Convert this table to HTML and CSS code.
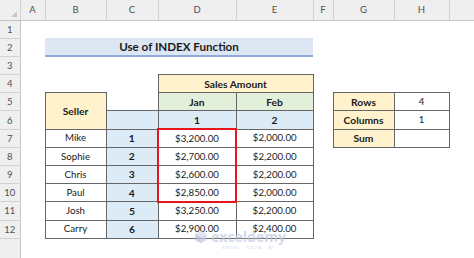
FILE: index.html
```html
<!DOCTYPE html>
<html lang="en">
<head>
    <meta charset="UTF-8">
    <title>Use of INDEX Function</title>
    <link rel="stylesheet" href="styles.css">
</head>
<body>
    <div class="sheet">
        <table class="grid">
            <colgroup>
                <col class="c-head">
                <col class="c-a">
                <col class="c-b">
                <col class="c-c">
                <col class="c-d">
                <col class="c-e">
                <col class="c-f">
                <col class="c-g">
                <col class="c-h">
                <col class="c-i">
            </colgroup>
            <tr class="col-heads">
                <th class="corner"><span class="tri"></span></th>
                <th>A</th><th>B</th><th>C</th><th>D</th><th>E</th><th>F</th><th>G</th><th>H</th><th></th>
            </tr>
            <tr>
                <th class="row-head">1</th>
                <td></td><td></td><td></td><td></td><td></td><td></td><td></td><td></td><td></td>
            </tr>
            <tr>
                <th class="row-head">2</th>
                <td></td>
                <td class="title" colspan="4">Use of INDEX Function</td>
                <td></td><td></td><td></td><td></td>
            </tr>
            <tr>
                <th class="row-head">3</th>
                <td></td><td></td><td></td><td></td><td></td><td></td><td></td><td></td><td></td>
            </tr>
            <tr>
                <th class="row-head">4</th>
                <td></td><td></td><td></td>
                <td class="box orange bold" colspan="2">Sales Amount</td>
                <td></td><td></td><td></td><td></td>
            </tr>
            <tr>
                <th class="row-head">5</th>
                <td></td>
                <td class="box orange bold" rowspan="2">Seller</td>
                <td></td>
                <td class="box green bold">Jan</td>
                <td class="box green bold">Feb</td>
                <td></td>
                <td class="box orange bold">Rows</td>
                <td class="box">4</td>
                <td></td>
            </tr>
            <tr>
                <th class="row-head">6</th>
                <td></td>
                <td class="box blue"></td>
                <td class="box blue bold">1</td>
                <td class="box blue bold">2</td>
                <td></td>
                <td class="box orange bold">Columns</td>
                <td class="box">1</td>
                <td></td>
            </tr>
            <tr>
                <th class="row-head">7</th>
                <td></td>
                <td class="box">Mike</td>
                <td class="box blue bold">1</td>
                <td class="box pick pick-top">$3,200.00</td>
                <td class="box">$2,000.00</td>
                <td></td>
                <td class="box orange bold">Sum</td>
                <td class="box"></td>
                <td></td>
            </tr>
            <tr>
                <th class="row-head">8</th>
                <td></td>
                <td class="box">Sophie</td>
                <td class="box blue bold">2</td>
                <td class="box pick">$2,700.00</td>
                <td class="box">$2,200.00</td>
                <td></td><td></td><td></td><td></td>
            </tr>
            <tr>
                <th class="row-head">9</th>
                <td></td>
                <td class="box">Chris</td>
                <td class="box blue bold">3</td>
                <td class="box pick">$2,600.00</td>
                <td class="box">$2,200.00</td>
                <td></td><td></td><td></td><td></td>
            </tr>
            <tr>
                <th class="row-head">10</th>
                <td></td>
                <td class="box">Paul</td>
                <td class="box blue bold">4</td>
                <td class="box pick pick-bottom">$2,850.00</td>
                <td class="box">$2,000.00</td>
                <td></td><td></td><td></td><td></td>
            </tr>
            <tr>
                <th class="row-head">11</th>
                <td></td>
                <td class="box">Josh</td>
                <td class="box blue bold">5</td>
                <td class="box">$3,250.00</td>
                <td class="box">$2,200.00</td>
                <td></td><td></td><td></td><td></td>
            </tr>
            <tr>
                <th class="row-head">12</th>
                <td></td>
                <td class="box">Carry</td>
                <td class="box blue bold">6</td>
                <td class="box">$2,900.00</td>
                <td class="box">$2,400.00</td>
                <td></td><td></td><td></td><td></td>
            </tr>
            <tr class="last">
                <th class="row-head"></th>
                <td></td><td></td><td></td><td></td><td></td><td></td><td></td><td></td><td></td>
            </tr>
        </table>

        <div class="watermark">
            <div class="wm-name">
                <svg class="wm-logo" width="14" height="14" viewBox="0 0 16 16">
                    <path d="M8 1 L14.5 4.5 L14.5 11.5 L8 15 L1.5 11.5 L1.5 4.5 Z" fill="#c3cbe0"/>
                    <path d="M8 1 L14.5 4.5 L8 8 L1.5 4.5 Z" fill="#d6dcec"/>
                    <path d="M8 8 L8 15 L1.5 11.5 L1.5 4.5 Z" fill="#b3bdd6"/>
                </svg>
                <span>exceldemy</span>
            </div>
            <div class="wm-tag">EXCEL · DATA · BI</div>
        </div>
    </div>
</body>
</html>
```

FILE: styles.css
```css
:root {
    --head-bg: #efefef;
    --head-line: #d2d2d2;
    --head-text: #4f4f4f;
    --cell-line: #666666;
    --text: #1a1a1a;
    --orange: #fff2cc;
    --green: #e2efda;
    --blue: #ddebf7;
    --title-bg: #dde7f3;
    --title-line: #8eaadb;
    --pick: #e8161b;
}

* {
    margin: 0;
    padding: 0;
    box-sizing: border-box;
}

body {
    width: 474px;
    height: 258px;
    overflow: hidden;
    background: white;
    font-family: Lato, "Open Sans", sans-serif;
    color: var(--text);
}

.sheet {
    position: relative;
    width: 474px;
    height: 258px;
    overflow: hidden;
}

.grid {
    border-collapse: collapse;
    table-layout: fixed;
    width: 474px;
    font-size: 9.7px;
}

.c-head { width: 20px; }
.c-a { width: 25px; }
.c-b { width: 61px; }
.c-c { width: 52px; }
.c-d { width: 78px; }
.c-e { width: 77px; }
.c-f { width: 20px; }
.c-g { width: 61px; }
.c-h { width: 55px; }
.c-i { width: 25px; }

.grid tr {
    height: 18.2px;
}

.grid td {
    text-align: center;
    vertical-align: middle;
    padding: 0;
    white-space: nowrap;
    line-height: 1;
}

.col-heads {
    height: 20px !important;
}

.col-heads th {
    background: var(--head-bg);
    border-right: 1px solid var(--head-line);
    border-bottom: 1px solid #c4c4c4;
    color: var(--head-text);
    font-weight: normal;
    font-size: 9.5px;
}

.corner {
    position: relative;
}

.tri {
    position: absolute;
    right: 3px;
    bottom: 3px;
    width: 0;
    height: 0;
    border-left: 6px solid transparent;
    border-bottom: 6px solid #c9c9c9;
}

.row-head {
    background: var(--head-bg);
    border-right: 1px solid #c4c4c4;
    border-bottom: 1px solid var(--head-line);
    color: var(--head-text);
    font-weight: normal;
    font-size: 9.5px;
}

.last {
    height: 30px !important;
}

.title {
    background: var(--title-bg);
    border-bottom: 2px solid var(--title-line);
    font-weight: bold;
    font-size: 11.6px;
}

.box {
    border: 1px solid var(--cell-line);
}

.bold {
    font-weight: bold;
    font-size: 10.3px;
}

.orange { background: var(--orange); }
.green { background: var(--green); }
.blue { background: var(--blue); }

.pick {
    border-left: 2px solid var(--pick);
    border-right: 2px solid var(--pick);
}

.pick-top {
    border-top: 2px solid var(--pick);
}

.pick-bottom {
    border-bottom: 2px solid var(--pick);
}

.watermark {
    position: absolute;
    left: 194px;
    top: 230px;
    opacity: 0.7;
    color: #c3cbe0;
}

.wm-name {
    display: flex;
    align-items: center;
    gap: 3px;
    font-family: "Open Sans", sans-serif;
    font-weight: bold;
    font-size: 14px;
    line-height: 1;
}

.wm-tag {
    margin-left: 28px;
    margin-top: 1px;
    font-size: 4.5px;
    letter-spacing: 1px;
}
```
